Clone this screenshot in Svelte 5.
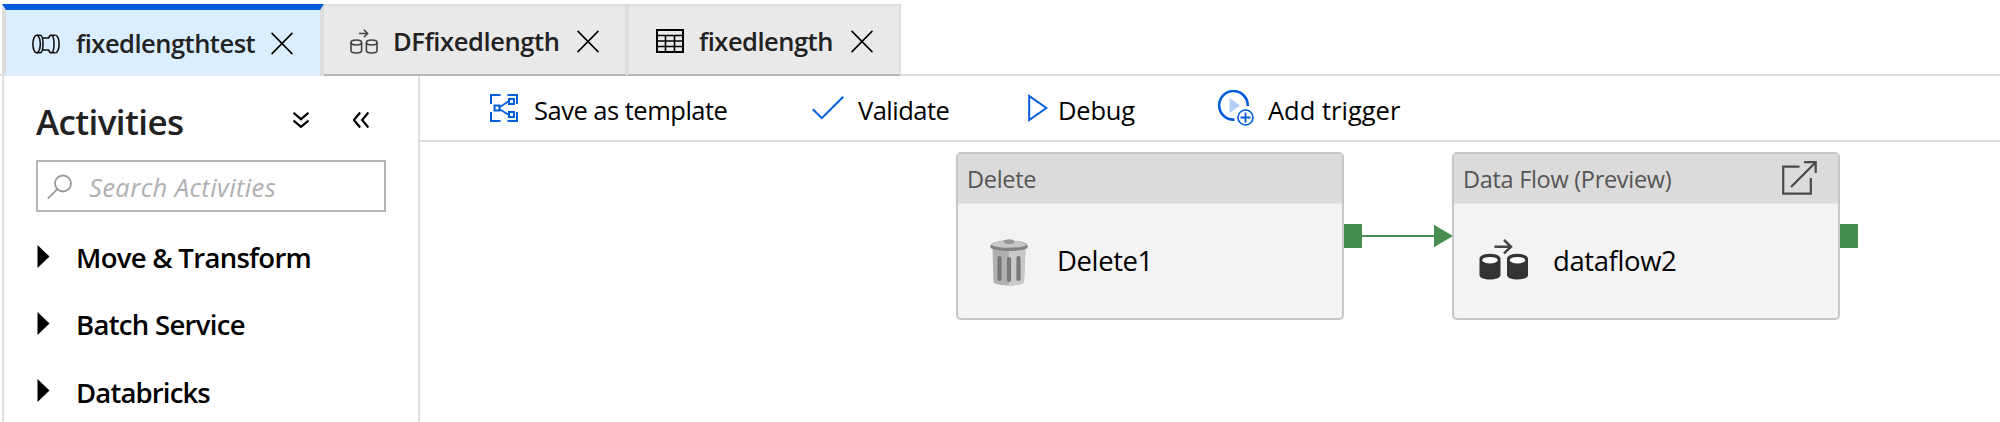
<script>
  const tabs = [
    { id: 'pipeline', label: 'fixedlengthtest', active: true },
    { id: 'flow', label: 'DFfixedlength', active: false },
    { id: 'table', label: 'fixedlength', active: false }
  ];
  const groups = [
    { id: 'move', label: 'Move & Transform' },
    { id: 'batch', label: 'Batch Service' },
    { id: 'bricks', label: 'Databricks' }
  ];
</script>

<div class="app">
  <nav class="tabs">
    {#each tabs as tab (tab.id)}
      <div class="tab {tab.id}" class:active={tab.active}>
        {#if tab.id === 'pipeline'}
          <svg class="icon" width="28" height="20" viewBox="0 0 28 20" fill="none" stroke="#111" stroke-width="1.6">
            <ellipse cx="4.6" cy="10" rx="3.7" ry="8.8" />
            <path d="M4.6 1.2H8c2 0 3 4 3 8.8s-1 8.800-3 8.800H4.600M10.200 4h7M10.200 16h7M19 1.200c2 0 3 4 3 8.800s-1 8.800-3 8.800c-1 0-1.800-1-2.200-2.800M19 1.200c-1 0-1.800 1-2.200 2.800M19 1.200h4.400M19 18.800h4.400" />
            <path d="M23.400 1.200c2.200 0 3.700 4 3.700 8.800s-1.500 8.800-3.700 8.800" />
          </svg>
        {:else if tab.id === 'flow'}
          <svg class="icon" width="28" height="25" viewBox="0 0 28 25" fill="none" stroke="#444" stroke-width="1.6">
            <path d="M9 4.500h8.500M13.800.800l3.800 3.700-3.800 3.700" />
            <ellipse cx="6.300" cy="13.500" rx="5.300" ry="2.500" />
            <path d="M1 13.500v8c0 1.500 2.400 2.500 5.300 2.500s5.300-1 5.300-2.500v-8" />
            <ellipse cx="21.700" cy="13.500" rx="5.300" ry="2.500" />
            <path d="M16.400 13.500v8c0 1.500 2.400 2.500 5.300 2.500s5.300-1 5.300-2.500v-8" />
          </svg>
        {:else}
          <svg class="icon" width="28" height="24" viewBox="0 0 28 24" fill="none" stroke="#000" stroke-width="1.600">
            <rect x="1" y="1" width="26" height="22" stroke-width="2" />
            <path d="M1 6.500h26M1 12h26M1 17.500h26M9.500 6.500V23M18.500 6.500V23" />
          </svg>
        {/if}
        <span class="label">{tab.label}</span>
        <svg class="close" width="22" height="23" viewBox="0 0 22 23" stroke="#000" stroke-width="1.700"><path d="M.500.900l21 21.200M21.500.900L.500 22.100" /></svg>
      </div>
    {/each}
  </nav>

  <div class="main">
    <aside>
      <header>
        <h1>Activities</h1>
        <svg class="down" width="16" height="16" viewBox="0 0 16 16" fill="none" stroke="#000" stroke-width="2.200"><path d="M.500.800L8 7.200 15.500.800M.500 8.500L8 14.900l7.500-6.400" /></svg>
        <svg class="left" width="16" height="16" viewBox="0 0 16 16" fill="none" stroke="#000" stroke-width="2.200"><path d="M7.200.500L.900 8l6.300 7.500M15.400.500L9.100 8l6.300 7.500" /></svg>
      </header>
      <div class="search">
        <svg width="26" height="26" viewBox="0 0 26 26" fill="none" stroke="#999" stroke-width="1.800"><circle cx="16" cy="9.500" r="8" /><path d="M10.300 15.200L.800 24.600" /></svg>
        <span>Search Activities</span>
      </div>
      <ul>
        {#each groups as group (group.id)}
          <li>
            <svg width="13" height="23" viewBox="0 0 13 23"><path d="M.500 0v23L12.500 11.500z" /></svg>
            <span class={group.id}>{group.label}</span>
          </li>
        {/each}
      </ul>
    </aside>

    <section>
      <div class="toolbar">
        <div class="tool save">
          <svg width="28" height="28" viewBox="0 0 28 28" fill="none" stroke="#015cda" stroke-width="2">
            <path d="M1 10V1h9.500M17.500 1H27v9M1 18v9h9.500M17.500 27H27v-9" />
            <path d="M10 13l9-6M10 15.500l9 5.500" stroke-width="1.600" />
            <rect x="4.500" y="11.500" width="5" height="5" /><rect x="19" y="5" width="5" height="5" /><rect x="19" y="18" width="5" height="5" />
          </svg>
          <span>Save as template</span>
        </div>
        <div class="tool validate">
          <svg width="32" height="24" viewBox="0 0 32 24" fill="none" stroke="#015cda" stroke-width="2"><path d="M.800 13.200l9 9L31.200.800" /></svg>
          <span>Validate</span>
        </div>
        <div class="tool debug">
          <svg width="20" height="28" viewBox="0 0 20 28" fill="none" stroke="#015cda" stroke-width="2"><path d="M1.200 2v24L18.400 14z" /></svg>
          <span>Debug</span>
        </div>
        <div class="tool trigger">
          <svg width="36" height="36" viewBox="0 0 36 36" fill="none">
            <path d="M16.500 29.600A14.300 14.300 0 1 1 29.700 16" stroke="#015cda" stroke-width="2.600" />
            <path d="M11.500 8v15l10.500-7.500z" fill="#b3cef4" />
            <circle cx="27.500" cy="27.500" r="7.500" stroke="#015cda" stroke-width="1.600" />
            <path d="M27.500 22.500v10M22.500 27.500h10" stroke="#015cda" stroke-width="1.800" />
          </svg>
          <span>Add trigger</span>
        </div>
      </div>

      <div class="canvas">
        <div class="node delete">
          <div class="head"><span>Delete</span></div>
          <div class="body">
            <svg class="trash" width="38" height="47" viewBox="0 0 38 47">
              <path d="M2.500 10h33l-1.500 33c-1 2-8 3.500-15 3.500S4 45 3.500 43z" fill="#b1b1b1" />
              <path d="M19 10h16.500L34 43c-1 2-8 3.500-15 3.500z" fill="#c9c9c9" />
              <path d="M.500 6.500C2 3.500 9 1.500 19 1.500s17 2 18.500 5v2.500c-4 2-11 3-18.500 3S4 11 .500 9z" fill="#828282" />
              <path d="M1.500 6C4 3 10 1.700 19 1.700S34 3 36.500 6C33 8 27 8.800 19 8.800S5 8 1.500 6z" fill="#c7c7c7" />
              <ellipse cx="19" cy="2.700" rx="5.500" ry="2.500" fill="#999" />
              <path d="M9.500 19v21M19 20v21M28.500 19v21" stroke="#787878" stroke-width="4.200" stroke-linecap="round" />
            </svg>
            <span>Delete1</span>
          </div>
          <i class="port"></i>
        </div>
        <svg class="link" width="110" height="24" viewBox="0 0 110 24"><path d="M18 12h75" stroke="#478f50" stroke-width="2" /><path d="M91 .800v22.400L110 12z" fill="#478f50" /></svg>
        <div class="node flow">
          <div class="head">
            <span>Data Flow (Preview)</span>
            <svg class="open" width="35" height="34" viewBox="0 0 35 34" fill="none" stroke="#4a4a4a" stroke-width="2.200"><path d="M17.500 5.700H1.200v27h27.600V17M9 26L33 2M22 1.200h11.700V12" /></svg>
          </div>
          <div class="body">
            <svg class="cyl" width="50" height="42" viewBox="0 0 50 42">
              <path d="M15.500 7.700h16M25 1l7 6.700-7 6.700" fill="none" stroke="#444" stroke-width="2.500" />
              <path d="M.500 20c0-7 21-7 21 0v16c0 6-21 6-21 0zM28 20c0-7 21-7 21 0v16c0 6-21 6-21 0z" fill="#333" />
              <ellipse cx="11" cy="21.200" rx="7.700" ry="3.300" fill="#fff" /><ellipse cx="38.500" cy="21.200" rx="7.700" ry="3.300" fill="#fff" />
            </svg>
            <span>dataflow2</span>
          </div>
          <i class="port"></i>
        </div>
      </div>
    </section>
  </div>
</div>

<style>
  :global(body) { background: #fff; }
  * { box-sizing: border-box; }
  svg { display: block; flex: none; }
  span, h1 { white-space: nowrap; line-height: 36px; }
  .app { width: 2000px; height: 422px; overflow: hidden; display: flex; flex-direction: column; padding-top: 4px; font-family: "Open Sans", "Noto Sans", sans-serif; font-size: 25.500px; color: #000; }
  .tabs { display: flex; height: 72px; padding-left: 2px; box-shadow: inset 0 -2px #ddd; flex: none; }
  .tab { display: flex; align-items: flex-start; background: #e9e9e9; border: 2px solid #ddd; border-bottom-color: #b6b6b6; padding-top: 19px; color: #222; font-weight: 600; }
  .tab.active { width: 322px; background: #dbeeff; border-width: 6px 4px 0; border-top-color: #015cda; padding: 19px 0 0 26px; }
  .tab.flow { width: 303px; border-left: 0; padding-left: 26px; }
  .tab.table { width: 274px; border-left-width: 2px; padding-left: 27px; }
  .pipeline .icon { margin-top: 5px; }
  .pipeline .label { width: 195px; margin: -4px 0 0 16px; letter-spacing: -0.500px; }
  .pipeline .close { margin-top: 3px; }
  .flow .icon { margin-top: 4px; }
  .flow .label { width: 184px; margin: -2px 0 0 15px; letter-spacing: -0.400px; }
  .flow .close, .table .close { margin-top: 5px; }
  .table .icon { margin-top: 4px; }
  .table .label { width: 152px; margin: -2px 0 0 15px; letter-spacing: -0.500px; }
  .main { display: flex; flex: 1; min-height: 0; padding-left: 2px; }
  aside { width: 418px; border: solid #ddd; border-width: 0 2px; padding: 0 32px; flex: none; }
  header { display: flex; height: 84px; padding-top: 36px; }
  h1 { margin: -14px 0 0; width: 257px; font-size: 35px; line-height: 48px; font-weight: 600; color: #222; letter-spacing: -0.600px; }
  .left { margin-left: 44px; }
  .search { display: flex; width: 350px; height: 52px; border: 2px solid #b6b6b6; padding: 12px 0 0 9px; color: #b0b0b0; font-style: italic; }
  .search span { margin: -5px 0 0 16px; letter-spacing: 0.400px; }
  ul { list-style: none; margin: 0; padding: 33px 0 0 1px; }
  li { display: flex; height: 67px; font-size: 27.500px; font-weight: 600; letter-spacing: -0.700px; }
  li span { margin: -5px 0 0 26px; }
  li .bricks { margin-top: -4px; letter-spacing: -0.850px; }
  section { flex: 1; display: flex; flex-direction: column; }
  .toolbar { height: 66px; border-bottom: 2px solid #ddd; display: flex; padding: 14px 0 0 70px; }
  .tool { display: flex; }
  .tool span { margin-top: 1.500px; letter-spacing: -0.500px; }
  .save { width: 322px; } .save svg { margin-top: 4px; } .save span { margin-left: 16px; }
  .validate { width: 216px; } .validate svg { margin-top: 6px; } .validate span { margin-left: 14px; }
  .debug { width: 190px; } .debug svg { margin-top: 4px; } .debug span { margin-left: 10px; letter-spacing: -0.200px; }
  .trigger span { margin-left: 14px; letter-spacing: 0; }
  .canvas { display: flex; padding: 10px 0 0 536px; }
  .node { position: relative; width: 388px; height: 168px; border: 2px solid #c6c6c6; border-radius: 5px; background: #f3f3f3; flex: none; }
  .head { height: 50px; background: #dbdbdb; border-bottom: 1px solid #e5e5e5; display: flex; padding: 7px 0 0 9px; font-size: 23.500px; color: #555; letter-spacing: -0.300px; }
  .head span { width: 319px; }
  .body { display: flex; font-size: 27.500px; padding-top: 35px; }
  .body span { margin-top: 4px; letter-spacing: -0.400px; }
  .trash { margin-left: 32px; } .trash + span { margin-left: 29px; }
  .cyl { margin: 0 0 0 25px; } .cyl + span { margin-left: 24px; }
  .port { position: absolute; left: 386px; top: 70px; width: 18px; height: 24px; background: #478f50; }
  .link { margin: 72px -1px 0 -1px; }
</style>
